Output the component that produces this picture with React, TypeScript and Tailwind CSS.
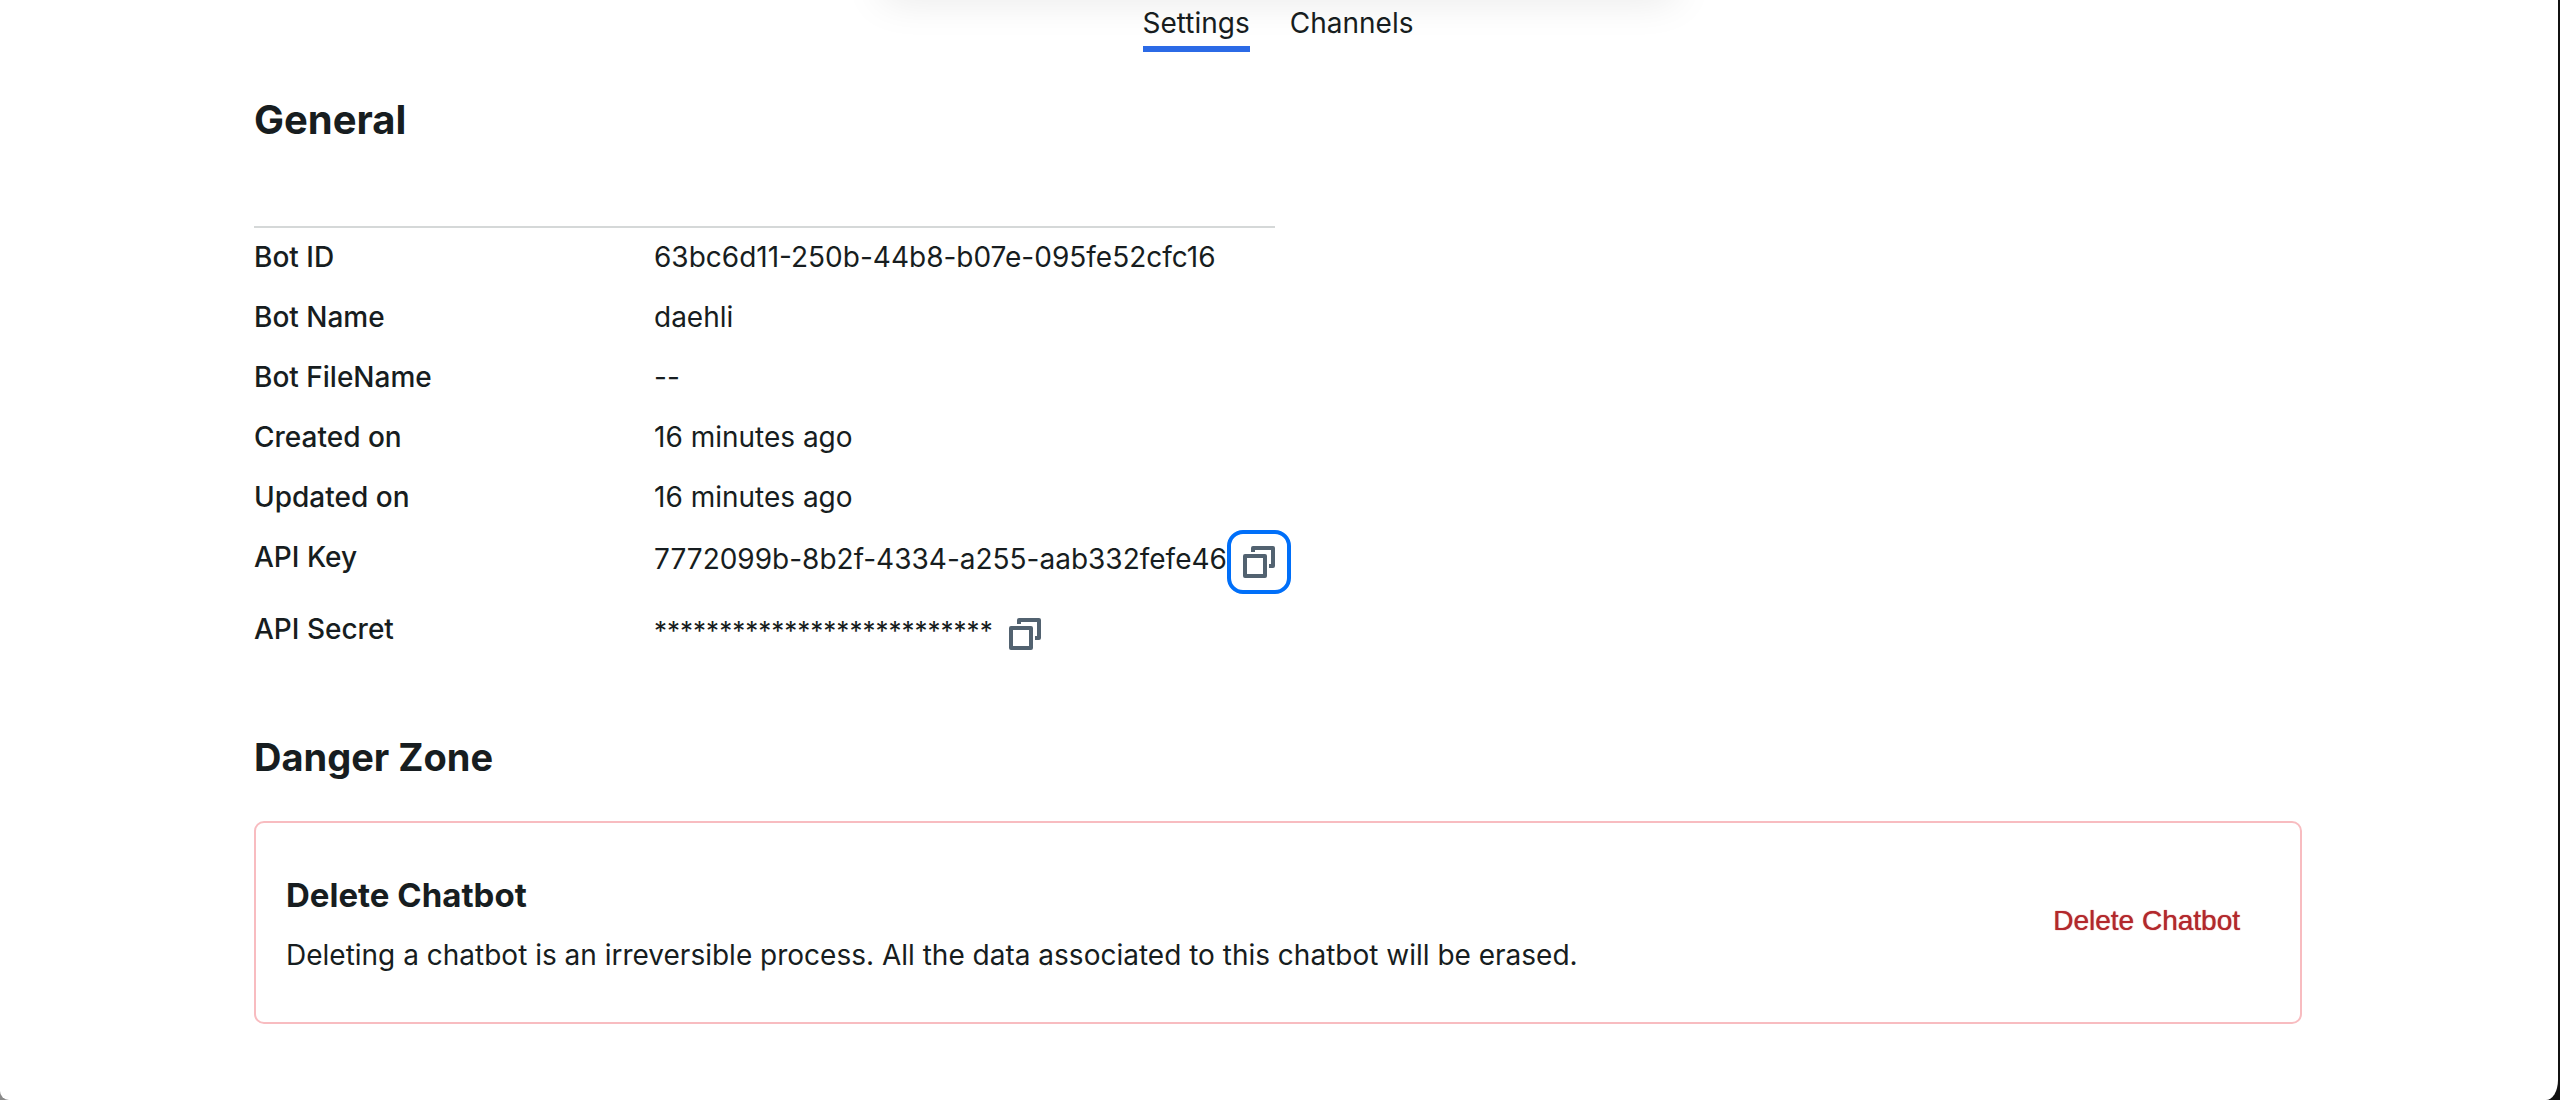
import { ReactNode } from "react";

function CopyIcon() {
  return (
    <svg viewBox="0 0 32 32" className="size-8" fill="none" stroke="#526270" strokeWidth="4" strokeLinejoin="round" aria-hidden="true">
      <path d="M10 6V2H30V20H26" />
      <path d="M2 10H22V30H2Z" />
    </svg>
  );
}

function CopyButton({ label, focused = false }: { label: string; focused?: boolean }) {
  return (
    <button
      type="button"
      aria-label={label}
      className={
        focused
          ? "flex size-16 shrink-0 items-center justify-center rounded-2xl border-4 border-[#006ff9]"
          : "flex size-16 shrink-0 items-center justify-center rounded-2xl border-4 border-transparent"
      }
    >
      <CopyIcon />
    </button>
  );
}

function Row({ label, children }: { label: string; children: ReactNode }) {
  return (
    <tr className="h-[60px] align-top leading-[58px]">
      <th scope="row" className="w-[400px] p-0 text-left font-medium">
        {label}
      </th>
      <td className="p-0 whitespace-nowrap">{children}</td>
    </tr>
  );
}

function Credential({ label, focused, children }: { label: string; focused?: boolean; children: ReactNode }) {
  return (
    <div className="flex items-start pt-[2px] pb-[6px]">
      {children}
      <CopyButton label={label} focused={focused} />
    </div>
  );
}

export default function App() {
  return (
    <div className="flex min-h-screen bg-linear-to-r from-[#8a8a8a] from-50% to-[#111111] to-50% pr-[2px] font-['Inter',sans-serif] text-[28px] text-[#171d20]">
      <div className="relative flex-1 overflow-hidden rounded-br-[12px_20px] rounded-bl-[9px] bg-white px-8 lg:pr-[256px] lg:pl-[254px]">
        <div className="absolute -top-10 left-1/2 h-8 w-[800px] -translate-x-1/2 rounded-full shadow-[0_8px_40px_rgba(0,0,0,0.10)]" />

        <nav className="relative flex justify-center gap-10 pt-[3px] leading-10">
          <a href="#settings" aria-current="page" className="border-b-6 border-[#2b6ae6] pb-[3px]">
            Settings
          </a>
          <a href="#channels">Channels</a>
        </nav>

        <main>
          <section>
            <h2 className="mt-[38px] text-[40px] leading-[60px] font-bold">General</h2>
            <div className="mt-[76px] max-w-[1021px] border-t-2 border-[#d5d8d8]">
              <table className="w-full table-fixed border-collapse">
                <tbody>
                  <Row label="Bot ID">63bc6d11-250b-44b8-b07e-095fe52cfc16</Row>
                  <Row label="Bot Name">daehli</Row>
                  <Row label="Bot FileName">--</Row>
                  <Row label="Created on">16 minutes ago</Row>
                  <Row label="Updated on">16 minutes ago</Row>
                  <Row label="API Key">
                    <Credential label="Copy API key" focused>
                      <span>7772099b-8b2f-4334-a255-aab332fefe46</span>
                    </Credential>
                  </Row>
                  <Row label="API Secret">
                    <Credential label="Copy API secret">
                      <span className="text-[26px]">**************************</span>
                    </Credential>
                  </Row>
                </tbody>
              </table>
            </div>
          </section>

          <section>
            <h2 className="mt-[55px] text-[38px] leading-[60px] font-bold">Danger Zone</h2>
            <div className="mt-[34px] flex items-center justify-between gap-8 rounded-[10px] border-2 border-[#f8bcc0] pt-[52px] pr-[60px] pb-[47px] pl-[30px]">
              <div className="leading-10">
                <h3 className="text-[33px] leading-10 font-bold">Delete Chatbot</h3>
                <p className="mt-5">
                  Deleting a chatbot is an irreversible process. All the data associated to this chatbot will be erased.
                </p>
              </div>
              <button
                type="button"
                className="shrink-0 pb-2 font-['Liberation_Sans',Arial,sans-serif] leading-10 text-[#b3282c] text-shadow-[0_0_1px_#b3282c]"
              >
                Delete Chatbot
              </button>
            </div>
          </section>
        </main>
      </div>
    </div>
  );
}
